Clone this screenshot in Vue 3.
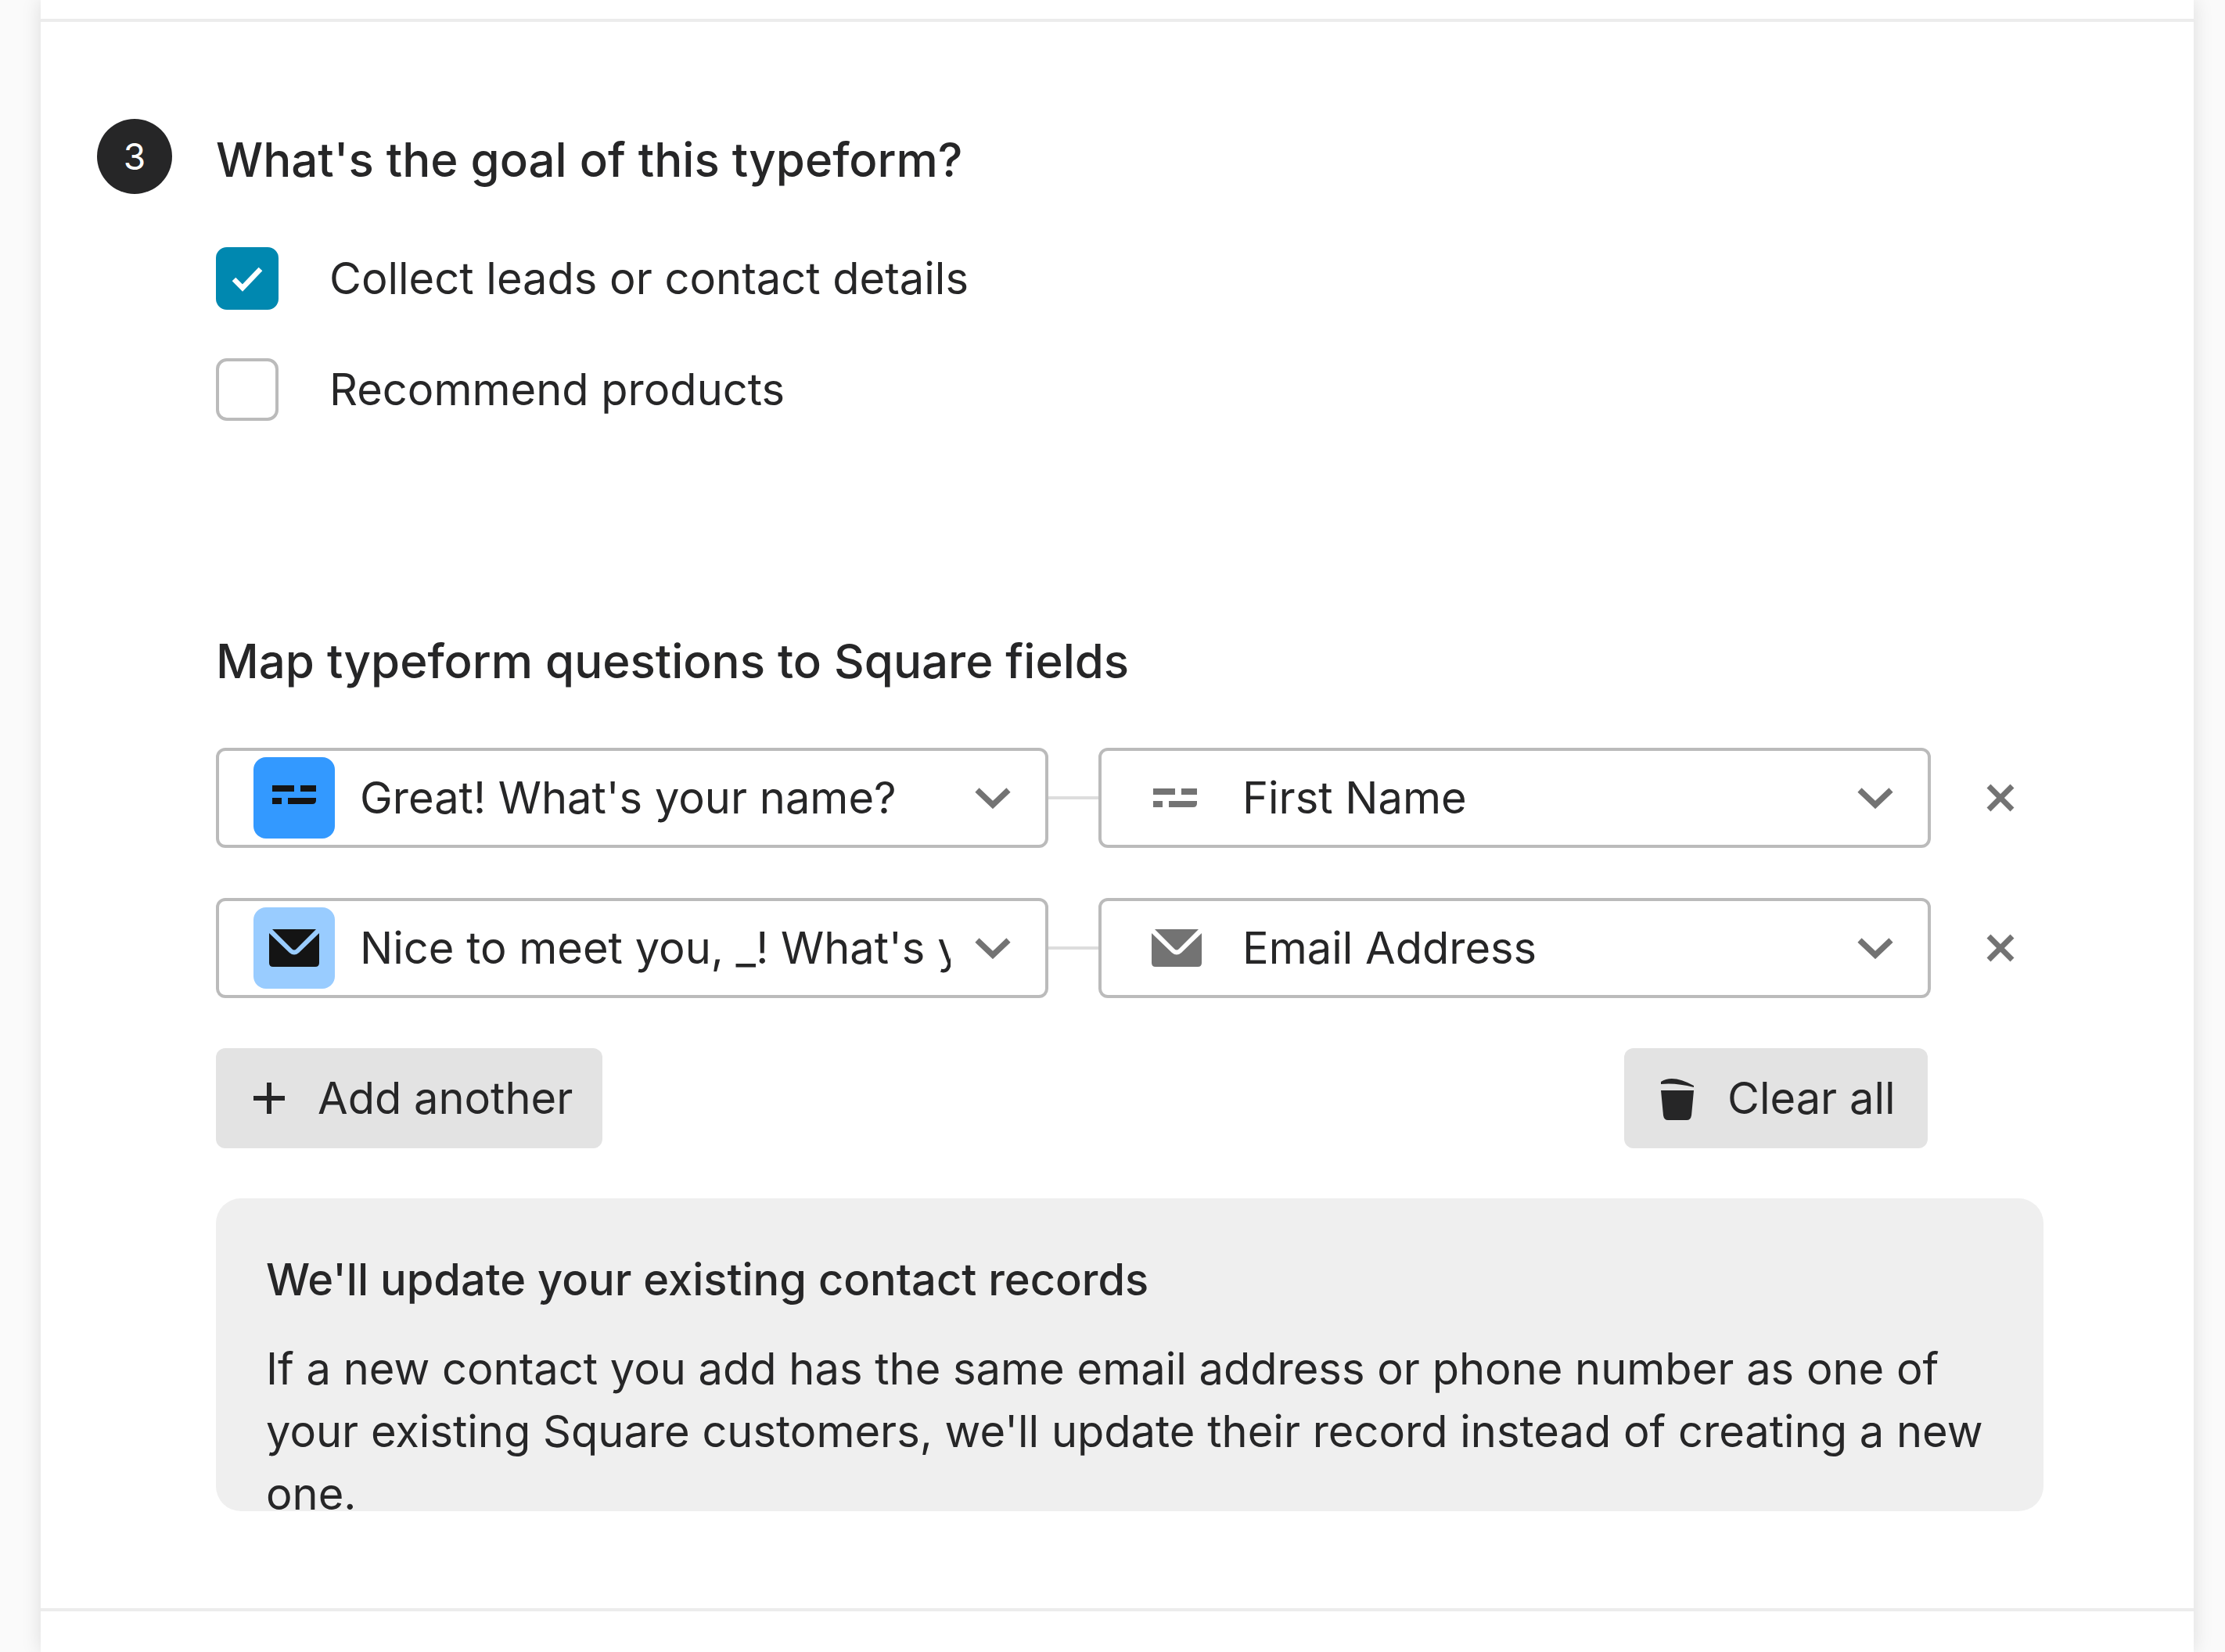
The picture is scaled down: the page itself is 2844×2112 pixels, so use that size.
<template>
  <div class="page">
    <div class="card">
      <div class="rule top-rule" />
      <section class="step">
        <div class="step-num">3</div>
        <div class="step-body">
          <h2 class="title">What's the goal of this typeform?</h2>
          <div class="goals">
            <label v-for="g in goals" :key="g.label" class="goal">
              <span class="box" :class="{ checked: g.checked }">
                <svg v-if="g.checked" width="50" height="40" viewBox="0 0 50 40">
                  <path d="M8 21 L19 32 L42 8" fill="none" stroke="#fff" stroke-width="6.5" />
                </svg>
              </span>
              <span>{{ g.label }}</span>
            </label>
          </div>

          <h2 class="title map-title">Map typeform questions to Square fields</h2>

          <div class="maps">
            <div v-for="m in mappings" :key="m.question" class="map-row">
              <div class="select">
                <span class="q-icon" :class="m.type">
                  <svg v-if="m.type === 'name'" width="64" height="32" viewBox="0 0 64 32">
                    <path d="M8 0h28v8H8zM44 0h20v8H44zM8 16h12v8H8zM28 16h36v3q0 5-5 5H28z" fill="#141414" transform="translate(-4 0)" />
                  </svg>
                  <svg v-else width="64" height="48" viewBox="0 0 64 48">
                    <path d="M4 0h56l-25 25q-3 3-6 0z" fill="#141414" />
                    <path d="M0 5l26 25q6 5 12 0L64 5v38q0 5-5 5H5q-5 0-5-5z" fill="#141414" />
                  </svg>
                </span>
                <span class="select-text">{{ m.question }}</span>
                <svg class="chev" width="46" height="28" viewBox="0 0 46 28">
                  <path d="M3 4 L23 23 L43 4" fill="none" stroke="#737373" stroke-width="7.5" />
                </svg>
              </div>
              <div class="link" />
              <div class="select">
                <span class="f-icon">
                  <svg v-if="m.type === 'name'" width="60" height="24" viewBox="0 0 60 24">
                    <path d="M0 0h28v8H0zM36 0h20v8H36zM0 16h12v8H0zM20 16h36v3q0 5-5 5H20z" fill="#737373" />
                  </svg>
                  <svg v-else width="66" height="48" viewBox="0 0 64 48">
                    <path d="M4 0h56l-25 25q-3 3-6 0z" fill="#737373" />
                    <path d="M0 5l26 25q6 5 12 0L64 5v38q0 5-5 5H5q-5 0-5-5z" fill="#737373" />
                  </svg>
                </span>
                <span class="select-text">{{ m.field }}</span>
                <svg class="chev" width="46" height="28" viewBox="0 0 46 28">
                  <path d="M3 4 L23 23 L43 4" fill="none" stroke="#737373" stroke-width="7.5" />
                </svg>
              </div>
              <svg class="remove" width="36" height="36" viewBox="0 0 36 36">
                <path d="M3 3 L33 33 M33 3 L3 33" stroke="#737373" stroke-width="7" />
              </svg>
            </div>
          </div>

          <div class="actions">
            <button class="btn add">
              <svg width="40" height="40" viewBox="0 0 40 40">
                <path d="M20 0v40M0 20h40" stroke="#262627" stroke-width="6" />
              </svg>
              Add another
            </button>
            <button class="btn clear">
              <svg width="44" height="56" viewBox="0 0 44 56">
                <path d="M1 7 Q16 -3 43 12 L43 14 Q20 8 1 10z" fill="#262627" />
                <path d="M1 18h42l-3 32q-1 6-6 6H10q-5 0-6-6z" fill="#262627" />
              </svg>
              Clear all
            </button>
          </div>

          <div class="info">
            <h3 class="info-title">We'll update your existing contact records</h3>
            <p class="info-text">If a new contact you add has the same email address or phone number as one of your existing Square customers, we'll update their record instead of creating a new one.</p>
          </div>
        </div>
      </section>
      <div class="rule bottom-rule" />
    </div>
  </div>
</template>

<script setup>
const goals = [
  { label: 'Collect leads or contact details', checked: true },
  { label: 'Recommend products', checked: false }
]
const mappings = [
  { type: 'name', question: "Great! What's your name?", field: 'First Name' },
  { type: 'mail', question: "Nice to meet you, _! What's your email address?", field: 'Email Address' }
]
</script>

<style>
body { margin: 0; }
</style>

<style scoped>
.page { width: 2844px; height: 2112px; overflow: hidden; background: #fafafa; font-family: Inter, "Liberation Sans", sans-serif; color: #262627; }
.card { width: 2752px; height: 2112px; margin-left: 52px; background: #fff; box-shadow: 0 0 24px rgba(0, 0, 0, .12); display: flex; flex-direction: column; }
.rule { height: 4px; background: #ececec; }
.top-rule { margin-top: 24px; }
.bottom-rule { margin-top: 124px; }
.step { display: flex; gap: 56px; padding: 124px 0 0 72px; }
.step-num { width: 96px; height: 96px; flex: none; border-radius: 50%; background: #262627; color: #fff; font-size: 46px; display: flex; align-items: center; justify-content: center; }
.step-body { width: 2336px; padding-top: 20px; }
.title { margin: 0; font-size: 60px; line-height: 64px; font-weight: 500; }
.goals { margin-top: 80px; display: flex; flex-direction: column; gap: 62px; }
.goal { height: 80px; display: flex; align-items: center; gap: 65px; font-size: 56px; }
.box { width: 80px; height: 80px; box-sizing: border-box; border: 4px solid #bbb; border-radius: 14px; display: flex; align-items: center; justify-content: center; }
.box.checked { background: #0088b0; border-color: #0088b0; }
.map-title { margin-top: 275px; }
.maps { margin-top: 79px; display: flex; flex-direction: column; gap: 64px; }
.map-row { display: flex; align-items: center; }
.select { width: 1064px; height: 128px; box-sizing: border-box; border: 4px solid #bbb; border-radius: 12px; padding: 0 44px; display: flex; align-items: center; font-size: 56px; background: #fff; }
.q-icon { width: 104px; height: 104px; flex: none; border-radius: 16px; display: flex; align-items: center; justify-content: center; }
.q-icon.name { background: #3399ff; }
.q-icon.mail { background: #99ccff; }
.f-icon { width: 104px; height: 104px; flex: none; display: flex; align-items: center; justify-content: center; }
.select-text { width: 755px; margin-left: 32px; white-space: nowrap; overflow: hidden; flex: none; }
.chev { flex: none; margin-left: 31px; }
.link { width: 64px; height: 4px; background: #ddd; }
.remove { margin-left: 71px; }
.actions { margin-top: 64px; width: 2188px; display: flex; justify-content: space-between; }
.btn { height: 128px; border: 0; border-radius: 12px; background: #e3e3e3; color: #262627; font: inherit; font-size: 56px; display: flex; align-items: center; }
.add { width: 494px; padding: 0 0 0 48px; gap: 42px; }
.clear { width: 388px; padding: 0 0 0 46px; gap: 42px; }
.info { margin-top: 64px; height: 400px; box-sizing: border-box; padding: 72px 64px 0; border-radius: 32px; background: #efefef; }
.info-title { margin: 0; font-size: 56px; line-height: 64px; font-weight: 500; }
.info-text { margin: 42px 0 0; font-size: 56px; line-height: 80px; }
</style>
